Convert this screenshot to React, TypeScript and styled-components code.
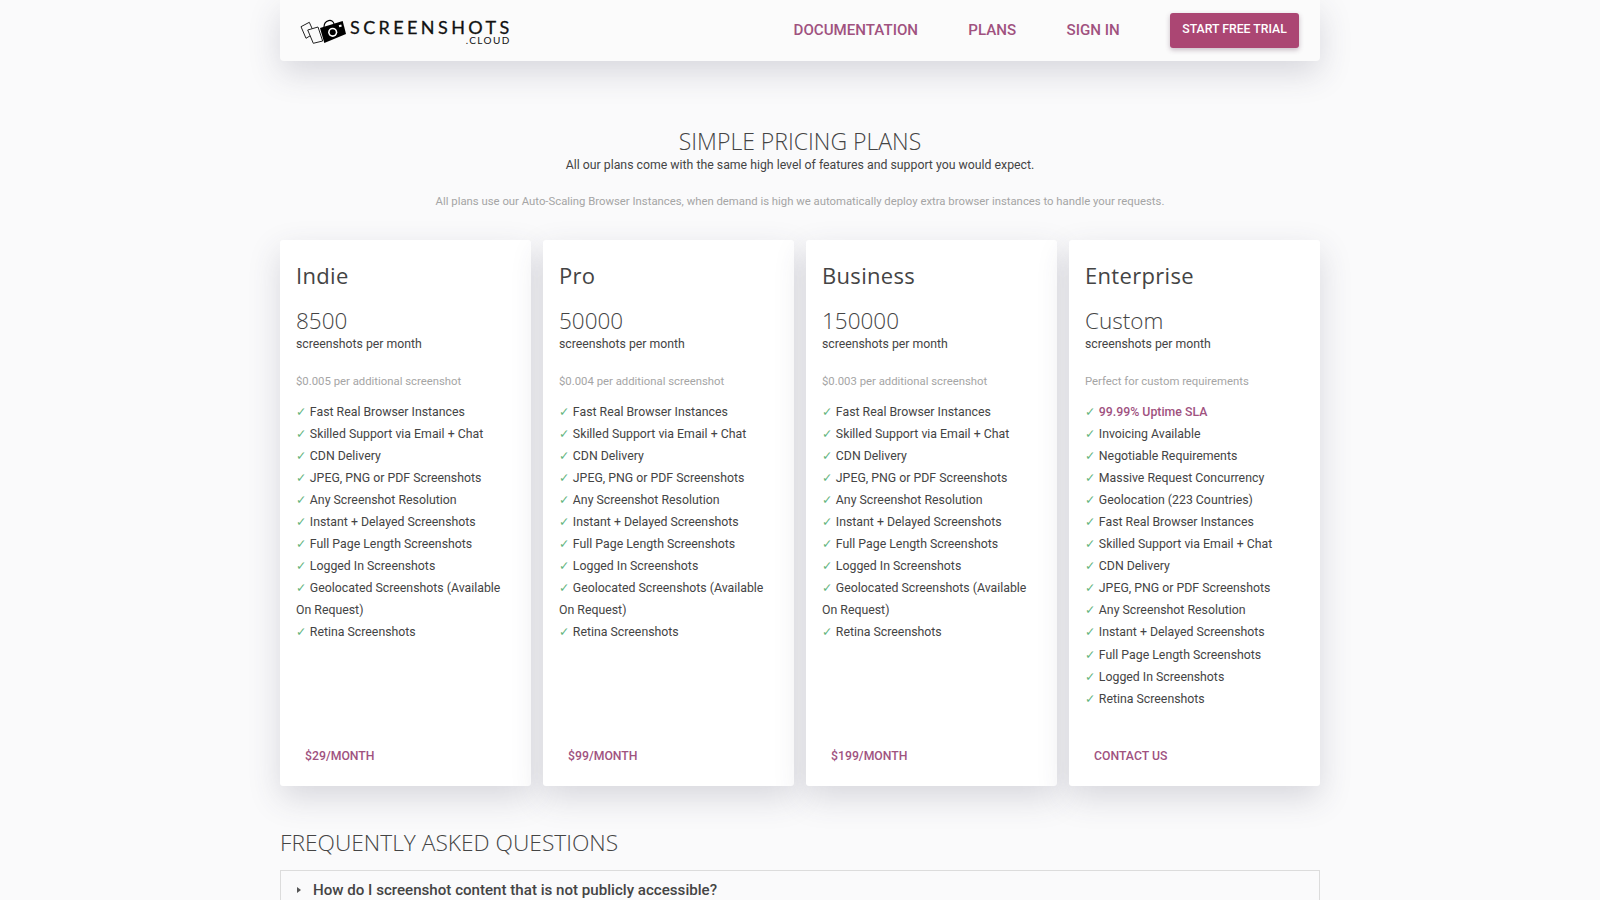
import React from "react";
import styled, { createGlobalStyle } from "styled-components";

const common = [
  "Fast Real Browser Instances",
  "Skilled Support via Email + Chat",
  "CDN Delivery",
  "JPEG, PNG or PDF Screenshots",
  "Any Screenshot Resolution",
  "Instant + Delayed Screenshots",
  "Full Page Length Screenshots",
  "Logged In Screenshots",
  "Geolocated Screenshots (Available On Request)",
  "Retina Screenshots",
];

const plans = [
  { name: "Indie", amount: "8500", extra: "$0.005 per additional screenshot", cta: "$29/month", features: common },
  { name: "Pro", amount: "50000", extra: "$0.004 per additional screenshot", cta: "$99/month", features: common },
  { name: "Business", amount: "150000", extra: "$0.003 per additional screenshot", cta: "$199/month", features: common },
  {
    name: "Enterprise",
    amount: "Custom",
    extra: "Perfect for custom requirements",
    cta: "Contact us",
    features: [
      "99.99% Uptime SLA",
      "Invoicing Available",
      "Negotiable Requirements",
      "Massive Request Concurrency",
      "Geolocation (223 Countries)",
      "Fast Real Browser Instances",
      "Skilled Support via Email + Chat",
      "CDN Delivery",
      "JPEG, PNG or PDF Screenshots",
      "Any Screenshot Resolution",
      "Instant + Delayed Screenshots",
      "Full Page Length Screenshots",
      "Logged In Screenshots",
      "Retina Screenshots",
    ],
  },
];

function LogoMark() {
  return (
    <svg width="48" height="26" viewBox="0 0 48 26">
      <g fill="#fafafa" stroke="#222" strokeWidth="1">
        <polygon points="1,7.7 9.3,3.3 14.3,14.3 6,19.3" />
        <polygon points="7.7,11 18,8 22.7,22 13.3,24.3" />
      </g>
      <polygon points="20,9 42.7,2 46,15 24.3,24" fill="#000" />
      <path d="M24 8c0-7 9-9 10-3" fill="none" stroke="#000" strokeWidth="1.2" />
      <circle cx="32.7" cy="13.3" r="4.6" fill="#fff" />
      <circle cx="32.7" cy="13.3" r="3" fill="#000" />
      <rect x="39" y="6" width="2.6" height="2" fill="#fff" transform="rotate(-17 40 7)" />
    </svg>
  );
}

export default function App() {
  return (
    <>
      <GlobalStyle />
      <Page>
        <Nav>
          <Logo>
            <LogoMark />
            <LogoText>
              <LogoName>SCREENSHOTS</LogoName>
              <LogoTld>.CLOUD</LogoTld>
            </LogoText>
          </Logo>
          <NavLinks>
            <NavLink href="#">Documentation</NavLink>
            <NavLink href="#">Plans</NavLink>
            <NavLink href="#">Sign in</NavLink>
            <TrialButton>Start free trial</TrialButton>
          </NavLinks>
        </Nav>

        <Intro>
          <Title>SIMPLE PRICING PLANS</Title>
          <Lead>All our plans come with the same high level of features and support you would expect.</Lead>
          <Note>All plans use our Auto-Scaling Browser Instances, when demand is high we automatically deploy extra browser instances to handle your requests.</Note>
        </Intro>

        <Plans>
          {plans.map((plan) => (
            <Card key={plan.name}>
              <PlanName>{plan.name}</PlanName>
              <Amount>{plan.amount}</Amount>
              <Unit>screenshots per month</Unit>
              <Extra>{plan.extra}</Extra>
              <Features>
                {plan.features.map((f) => (
                  <Feature key={f} $highlight={f.startsWith("99.99%")}>
                    <Check>✓</Check>
                    {f}
                  </Feature>
                ))}
              </Features>
              <Cta href="#">{plan.cta}</Cta>
            </Card>
          ))}
        </Plans>

        <FaqTitle>FREQUENTLY ASKED QUESTIONS</FaqTitle>
        <FaqItem>
          <FaqQuestion>How do I screenshot content that is not publicly accessible?</FaqQuestion>
        </FaqItem>
      </Page>
    </>
  );
}

const GlobalStyle = createGlobalStyle`
  html, body {
    margin: 0;
    background: #fafafb;
    font-family: Roboto, "Liberation Sans", sans-serif;
    color: #444;
  }
`;

const Page = styled.div`
  width: 1040px;
  margin: 0 auto;
  padding-bottom: 40px;
`;

const Nav = styled.header`
  height: 61px;
  padding: 0 21px 0 20px;
  display: flex;
  align-items: center;
  justify-content: space-between;
  background: #fbfbfb;
  border-radius: 0 0 4px 4px;
  box-shadow: 0 12px 32px rgba(60, 60, 90, 0.18);
`;

const Logo = styled.div`
  display: flex;
  align-items: center;
  gap: 2px;
  margin-top: 2px;
`;

const LogoText = styled.div`
  display: flex;
  flex-direction: column;
  align-items: flex-end;
  color: #111;
  font-family: Lato, sans-serif;
`;

const LogoName = styled.span`
  font-size: 18px;
  line-height: 16px;
  font-weight: 400;
  letter-spacing: 3.4px;
  margin-right: -3.4px;
  -webkit-text-stroke: 0.3px #111;
`;

const LogoTld = styled.span`
  font-size: 10px;
  line-height: 10px;
  letter-spacing: 1.4px;
  margin-right: -1.4px;
`;

const NavLinks = styled.nav`
  display: flex;
  align-items: center;
`;

const NavLink = styled.a`
  margin: 0 50.3px 2px 0;
  color: #a0527f;
  font-size: 15.12px;
  font-weight: 500;
  text-transform: uppercase;
  text-decoration: none;
`;

const TrialButton = styled.button`
  width: 129px;
  height: 35px;
  margin-bottom: 1px;
  padding: 0 0 3px;
  border: 0;
  border-radius: 3px;
  background: #ab4673;
  color: #fff;
  font-family: Roboto, sans-serif;
  font-size: 12.25px;
  font-weight: 500;
  text-transform: uppercase;
  box-shadow: 0 2px 5px rgba(80, 40, 70, 0.3);
`;

const Intro = styled.section`
  padding-top: 65px;
  text-align: center;
`;

const Title = styled.h1`
  margin: 0;
  font-family: "Open Sans", sans-serif;
  font-size: 23px;
  line-height: 30px;
  font-weight: 300;
`;

const Lead = styled.p`
  margin: 0;
  font-size: 12.3px;
  line-height: 18px;
`;

const Note = styled.p`
  margin: 18px 0 0;
  font-size: 11.33px;
  line-height: 18px;
  color: #a5a5a5;
`;

const Plans = styled.section`
  margin-top: 30px;
  display: grid;
  grid-template-columns: repeat(4, 251px);
  justify-content: space-between;
`;

const Card = styled.article`
  height: 546px;
  box-sizing: border-box;
  padding: 16px 16px 0;
  display: flex;
  flex-direction: column;
  background: #fff;
  border-radius: 3px;
  box-shadow: 0 12px 32px rgba(60, 60, 90, 0.18);
`;

const PlanName = styled.h2`
  margin: 6px 0 0;
  font-family: "Open Sans", sans-serif;
  font-size: 22px;
  line-height: 26px;
  font-weight: 500;
  letter-spacing: 0.32px;
  color: #444;
`;

const Amount = styled.div`
  margin-top: 18px;
  font-family: "Open Sans", sans-serif;
  font-size: 22.5px;
  line-height: 30px;
  font-weight: 300;
`;

const Unit = styled.div`
  margin-top: -1px;
  font-size: 12.25px;
  line-height: 18px;
`;

const Extra = styled.div`
  margin-top: 19px;
  font-size: 11.33px;
  line-height: 18px;
  color: #a5a5a5;
`;

const Features = styled.ul`
  margin: 11px 0 0;
  padding: 0;
  list-style: none;
`;

const Feature = styled.li<{ $highlight?: boolean }>`
  font-size: 12.32px;
  line-height: 22.05px;
  color: ${(p) => (p.$highlight ? "#a0527f" : "#444")};
  font-weight: ${(p) => (p.$highlight ? 500 : 400)};
`;

const Check = styled.span`
  margin-right: 3.5px;
  color: #62b47c;
  font-family: "DejaVu Sans", sans-serif;
  font-weight: 400;
`;

const Cta = styled.a`
  margin: auto 0 21px 9px;
  color: #a0527f;
  font-size: 12.25px;
  line-height: 18px;
  font-weight: 500;
  text-transform: uppercase;
  text-decoration: none;
`;

const FaqTitle = styled.h2`
  margin: 39.5px 0 0;
  font-family: "Open Sans", sans-serif;
  font-size: 22.75px;
  line-height: 33px;
  font-weight: 300;
`;

const FaqItem = styled.div`
  margin-top: 11.5px;
  padding: 8px 16px;
  border: 1px solid #dcdcdc;
`;

const FaqQuestion = styled.div`
  display: flex;
  align-items: center;
  font-size: 15.12px;
  line-height: 22px;
  font-weight: 500;

  &::before {
    content: "";
    margin-right: 12px;
    border-left: 4px solid #555;
    border-top: 3px solid transparent;
    border-bottom: 3px solid transparent;
  }
`;
